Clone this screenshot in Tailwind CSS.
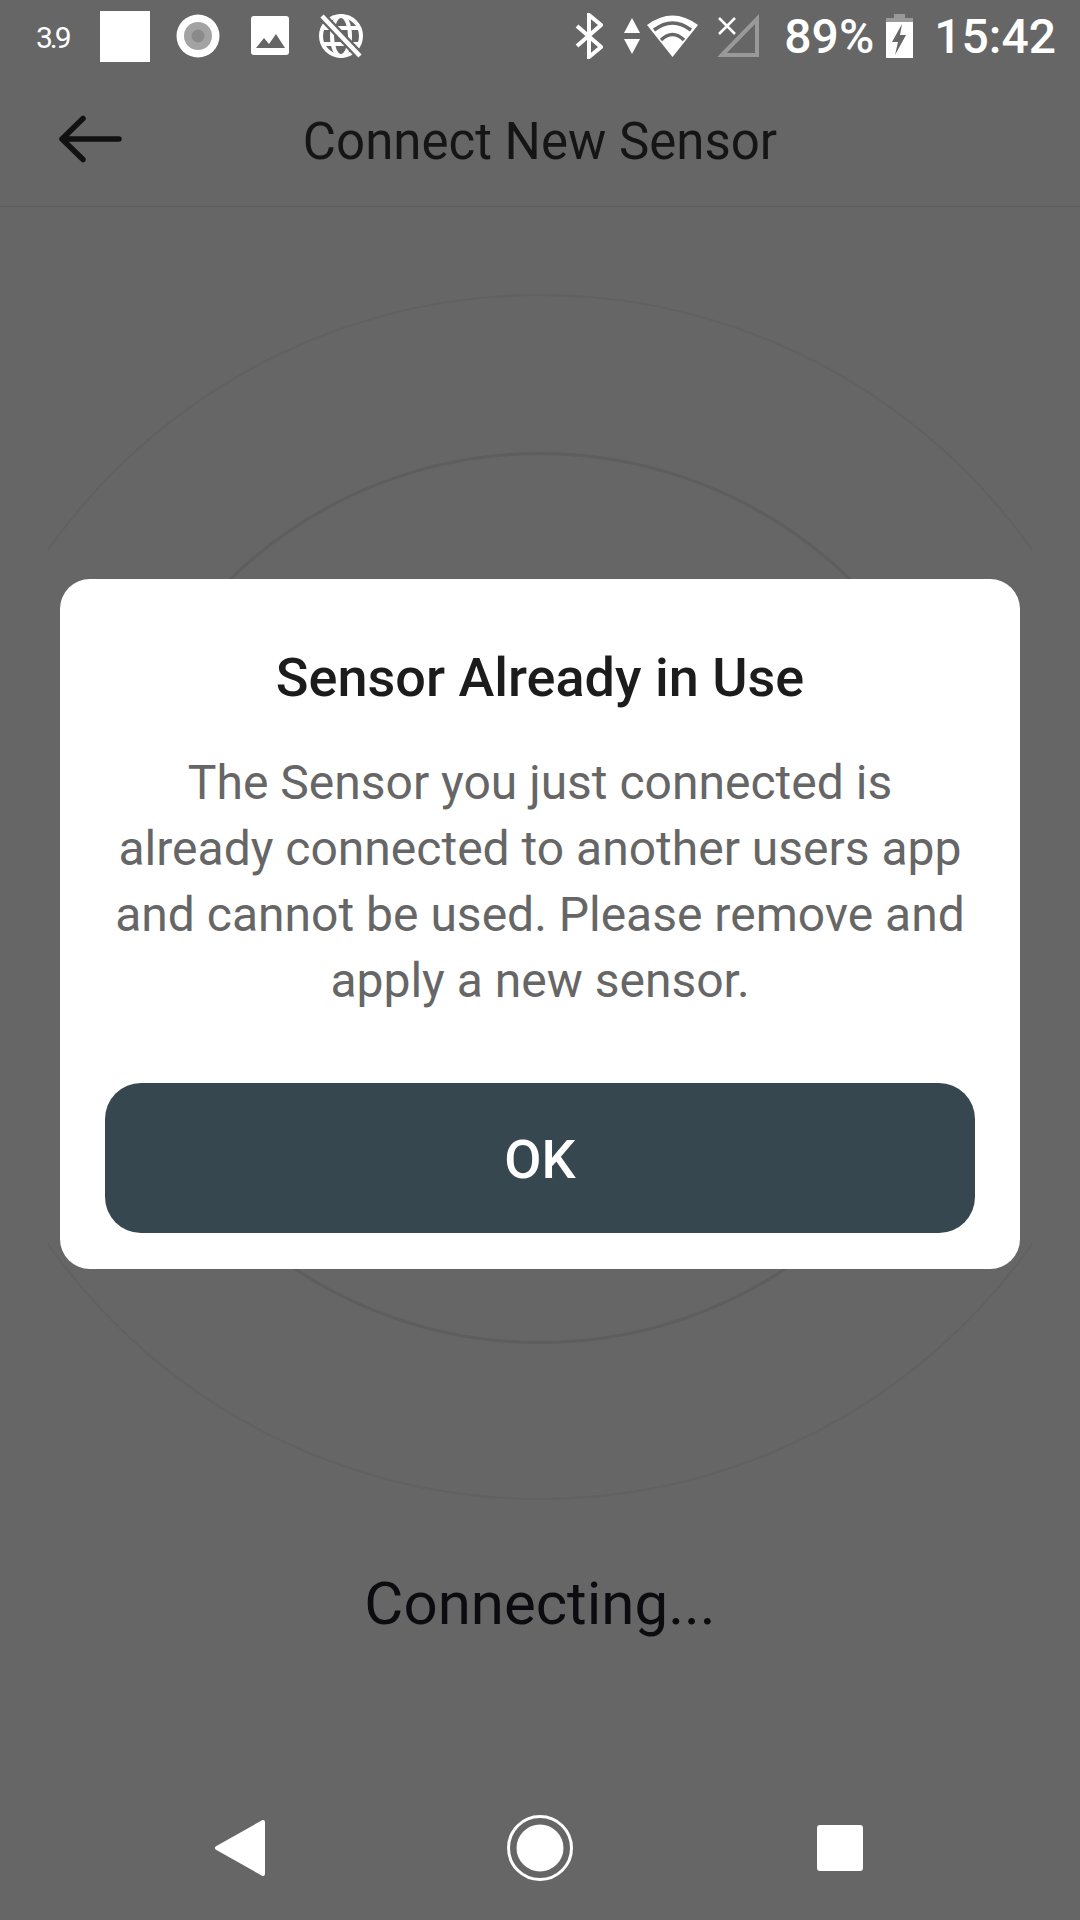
<!DOCTYPE html>
<html lang="en">
	<head>
		<meta charset="UTF-8" />
		<meta name="viewport" content="width=device-width, initial-scale=1.0" />
		<title>Connect New Sensor</title>
		<script src="https://cdn.jsdelivr.net/npm/@tailwindcss/browser@4"></script>
	</head>
	<body class="bg-[#666666] font-[Roboto,sans-serif]">
		<div class="relative w-[1080px] h-[1920px] overflow-hidden flex flex-col">
			<!-- status bar -->
			<div class="h-[72px] flex items-center justify-between pl-[36px] pr-[24px] text-white">
				<div class="flex items-center">
					<span class="text-[30px] tracking-[-3px] w-[64px] pt-[2px]">3.9</span>
					<div class="w-[50px] h-[51px] bg-white"></div>
					<svg class="ml-[26px]" width="44" height="44" viewBox="0 0 44 44">
						<circle cx="22" cy="22" r="21.500" fill="#fff" />
						<circle cx="22" cy="22" r="14" fill="#a3a3a3" />
						<circle cx="22" cy="22" r="6.500" fill="#8a8a8a" />
					</svg>
					<svg class="ml-[31px]" width="38" height="40" viewBox="0 0 38 40">
						<rect width="38" height="39" rx="3" fill="#fff" />
						<path d="M5 32l8-10 5 6 7-10 9 14z" fill="#666666" />
					</svg>
					<svg class="ml-[30px]" width="44" height="46" viewBox="0 0 44 46">
						<circle cx="22" cy="23" r="20" fill="#666666" stroke="#fff" stroke-width="4" />
						<g stroke="#fff" stroke-width="4" fill="none">
							<ellipse cx="22" cy="23" rx="9" ry="20" />
							<path d="M3 15h38M3 31h38" />
						</g>
						<path d="M3 3l38 40" stroke="#666666" stroke-width="9" />
						<path d="M3 3l38 40" stroke="#fff" stroke-width="4.500" />
					</svg>
				</div>
				<div class="flex items-center">
					<svg width="28" height="46" viewBox="0 0 28 46">
						<path d="M2 13l24 21-12 10V2l12 10L2 33" fill="none" stroke="#fff" stroke-width="4" />
					</svg>
					<svg class="ml-[21px]" width="16" height="36" viewBox="0 0 16 36">
						<path d="M8 0l8 15H0zM0 21h16l-8 15z" fill="#fff" />
					</svg>
					<svg class="ml-[7px]" width="51" height="44" viewBox="0 0 51 44">
						<path d="M25.500 43L0 11Q25.500-8 51 11z" fill="#fff" />
						<path d="M7 16Q25.500 2 44 16M14 26Q25.500 15 37 26" fill="none" stroke="#666666" stroke-width="3.500" />
					</svg>
					<svg class="ml-[19px]" width="42" height="44" viewBox="0 0 42 44">
						<path d="M5 41L40 5v36z" fill="none" stroke="#999999" stroke-width="4" />
						<path d="M2 4l16 16M18 4L2 20" stroke="#fff" stroke-width="2.500" />
					</svg>
					<span class="ml-[25px] text-[48px] leading-none font-medium pt-[2px]">89%</span>
					<svg class="ml-[12px]" width="27" height="44" viewBox="0 0 27 44">
						<path d="M8 0h11v4h8v8H0V4h8z" fill="#999999" />
						<path d="M0 8h27v36H0z" fill="#fff" />
						<path d="M16 10L6 28h6l-3 13 11-20h-6z" fill="#666666" />
					</svg>
					<span class="ml-[21px] text-[48px] leading-none font-medium pt-[2px]">15:42</span>
				</div>
			</div>
			<!-- header -->
			<div class="relative h-[135px] flex items-center justify-center border-b border-[#5b5b5b]">
				<svg class="absolute left-[59px] top-[40px]" width="66" height="54" viewBox="0 0 66 54">
					<path d="M60 27H3M24 6.500L3 27l21 20.500" fill="none" stroke="#111111" stroke-width="5.500" stroke-linecap="round" stroke-linejoin="round" />
				</svg>
				<h1 class="text-[51px] text-[#151515] leading-none pt-[4px]">Connect New Sensor</h1>
			</div>
			<!-- pulse rings behind the dialog -->
			<div class="absolute left-[48px] top-0 w-[984px] h-[1920px] overflow-hidden">
				<div class="absolute left-[-111px] top-[294px] w-[1206px] h-[1206px] rounded-full border-[2px] border-[#616161]"></div>
				<div class="absolute left-[46px] top-[452px] w-[892px] h-[892px] rounded-full border-[3px] border-[#5e5e5e]"></div>
			</div>
			<div class="absolute left-0 right-0 top-[1574px] text-center text-[60px] leading-none text-[#0b0b10]">Connecting...</div>
			<!-- dialog -->
			<div class="absolute left-[60px] top-[579px] w-[960px] h-[690px] bg-white rounded-[30px] px-[45px] pt-[72px] flex flex-col items-center">
				<h2 class="text-[54px] leading-[54px] font-medium text-[#1c1c1c]">Sensor Already in Use</h2>
				<p class="mt-[45px] text-[48px] leading-[66px] text-[#666666] text-center">The Sensor you just connected is<br />already connected to another users app<br />and cannot be used. Please remove and<br />apply a new sensor.</p>
				<button class="mt-[69px] w-[870px] h-[150px] shrink-0 bg-[#37474f] rounded-[36px] text-white text-[54px] font-medium pt-[3px]">OK</button>
			</div>
			<!-- nav bar -->
			<div class="absolute left-0 right-0 bottom-[39px] h-[66px] flex items-center justify-center">
				<svg class="absolute left-[213px]" width="52" height="60" viewBox="0 0 52 60">
					<path d="M50 4L4 30l46 26z" fill="#fff" stroke="#fff" stroke-width="4" stroke-linejoin="round" />
				</svg>
				<svg width="66" height="66" viewBox="0 0 66 66">
					<circle cx="33" cy="33" r="31.500" fill="none" stroke="#fff" stroke-width="3" />
					<circle cx="33" cy="33" r="23.500" fill="#fff" />
				</svg>
				<div class="absolute left-[817px] w-[46px] h-[46px] bg-white rounded-[3px]"></div>
			</div>
		</div>
	</body>
</html>
